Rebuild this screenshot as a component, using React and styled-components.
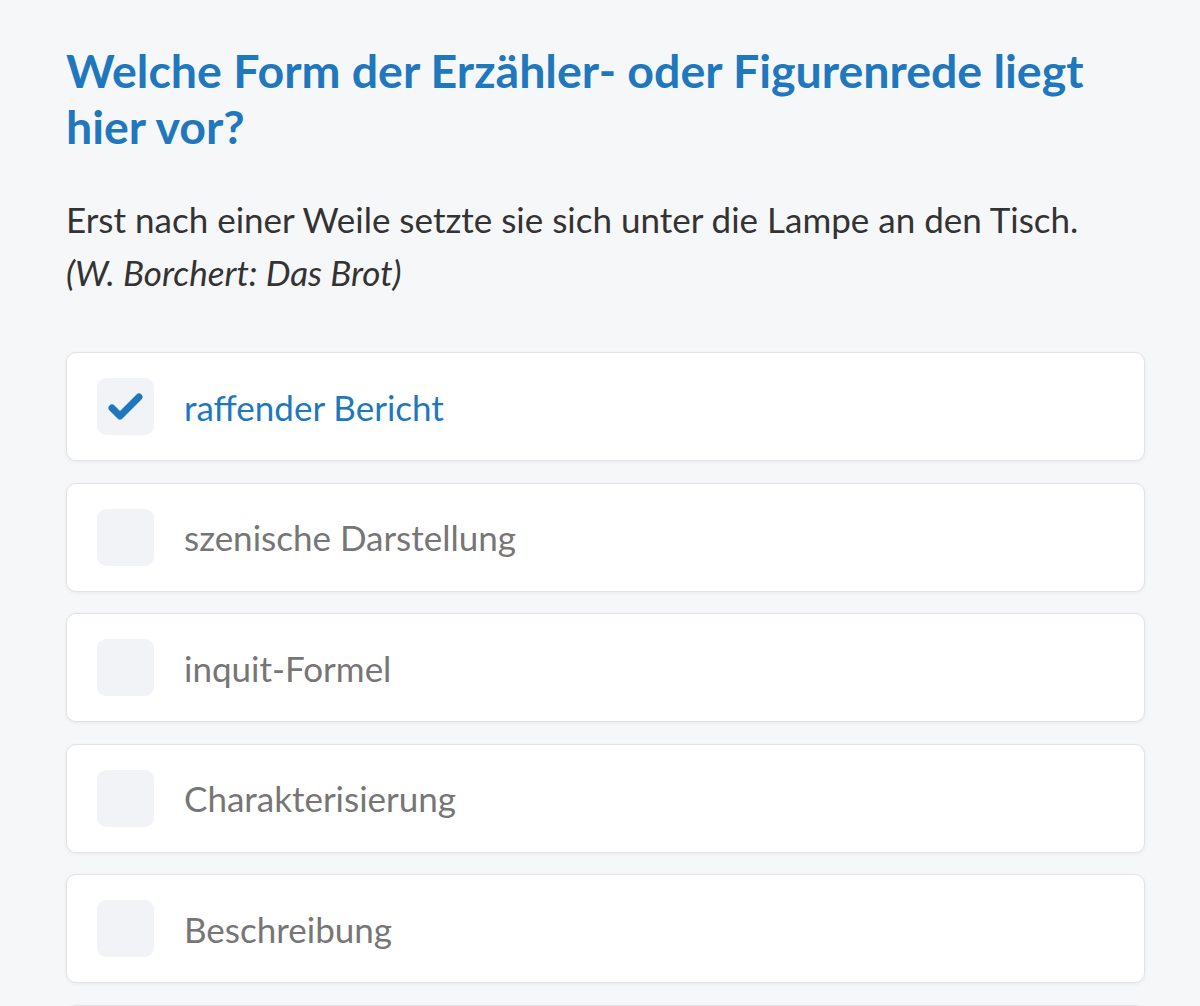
import React from "react";
import styled, { createGlobalStyle } from "styled-components";

const GlobalStyle = createGlobalStyle`
  html, body {
    margin: 0;
    padding: 0;
    background: #f6f7f9;
  }
  body {
    font-family: Lato, "Open Sans", sans-serif;
  }
`;

const Page = styled.div`
  padding: 42px 55px 0 66px;
  overflow: hidden;
  height: 1006px;
  box-sizing: border-box;
`;

const Question = styled.h1`
  margin: 0;
  font-size: 46.5px;
  line-height: 56px;
  font-weight: 700;
  color: #1f78bd;
`;

const Quote = styled.p`
  margin: 39px 0 0;
  font-size: 35px;
  line-height: 53px;
  color: #333;

  em {
    display: block;
    font-style: italic;
  }
`;

const Options = styled.div`
  margin-top: 53px;
  display: flex;
  flex-direction: column;
  gap: 21.5px;
`;

const Option = styled.div`
  display: flex;
  align-items: center;
  gap: 30px;
  height: 107px;
  padding: 0 30px;
  background: #fff;
  border: 1px solid #e3e3e7;
  border-radius: 10px;
  box-shadow: 0 1px 4px rgba(0, 0, 0, 0.06);
  flex-shrink: 0;
`;

const Box = styled.div`
  width: 57px;
  height: 57px;
  border-radius: 9px;
  background: #f1f3f7;
  display: flex;
  align-items: center;
  justify-content: center;
  flex-shrink: 0;
`;

const Label = styled.span`
  font-size: 35px;
  color: ${(p) => (p.$selected ? "#1f78bd" : "#767676")};
`;

const CheckIcon = () => (
  <svg width="36" height="28" viewBox="0 0 36 28">
    <polyline
      points="4,15 12,23 31,4"
      fill="none"
      stroke="#1f78bd"
      strokeWidth="7"
      strokeLinecap="round"
      strokeLinejoin="round"
    />
  </svg>
);

const answers = [
  { text: "raffender Bericht", selected: true },
  { text: "szenische Darstellung" },
  { text: "inquit-Formel" },
  { text: "Charakterisierung" },
  { text: "Beschreibung" },
];

export default function App() {
  return (
    <>
      <GlobalStyle />
      <Page>
        <Question>Welche Form der Erzähler- oder Figurenrede liegt hier vor?</Question>
        <Quote>
          Erst nach einer Weile setzte sie sich unter die Lampe an den Tisch.
          <em>(W. Borchert: Das Brot)</em>
        </Quote>
        <Options>
          {answers.map((a) => (
            <Option key={a.text}>
              <Box>{a.selected && <CheckIcon />}</Box>
              <Label $selected={a.selected}>{a.text}</Label>
            </Option>
          ))}
          <Option aria-hidden="true" />
        </Options>
      </Page>
    </>
  );
}
